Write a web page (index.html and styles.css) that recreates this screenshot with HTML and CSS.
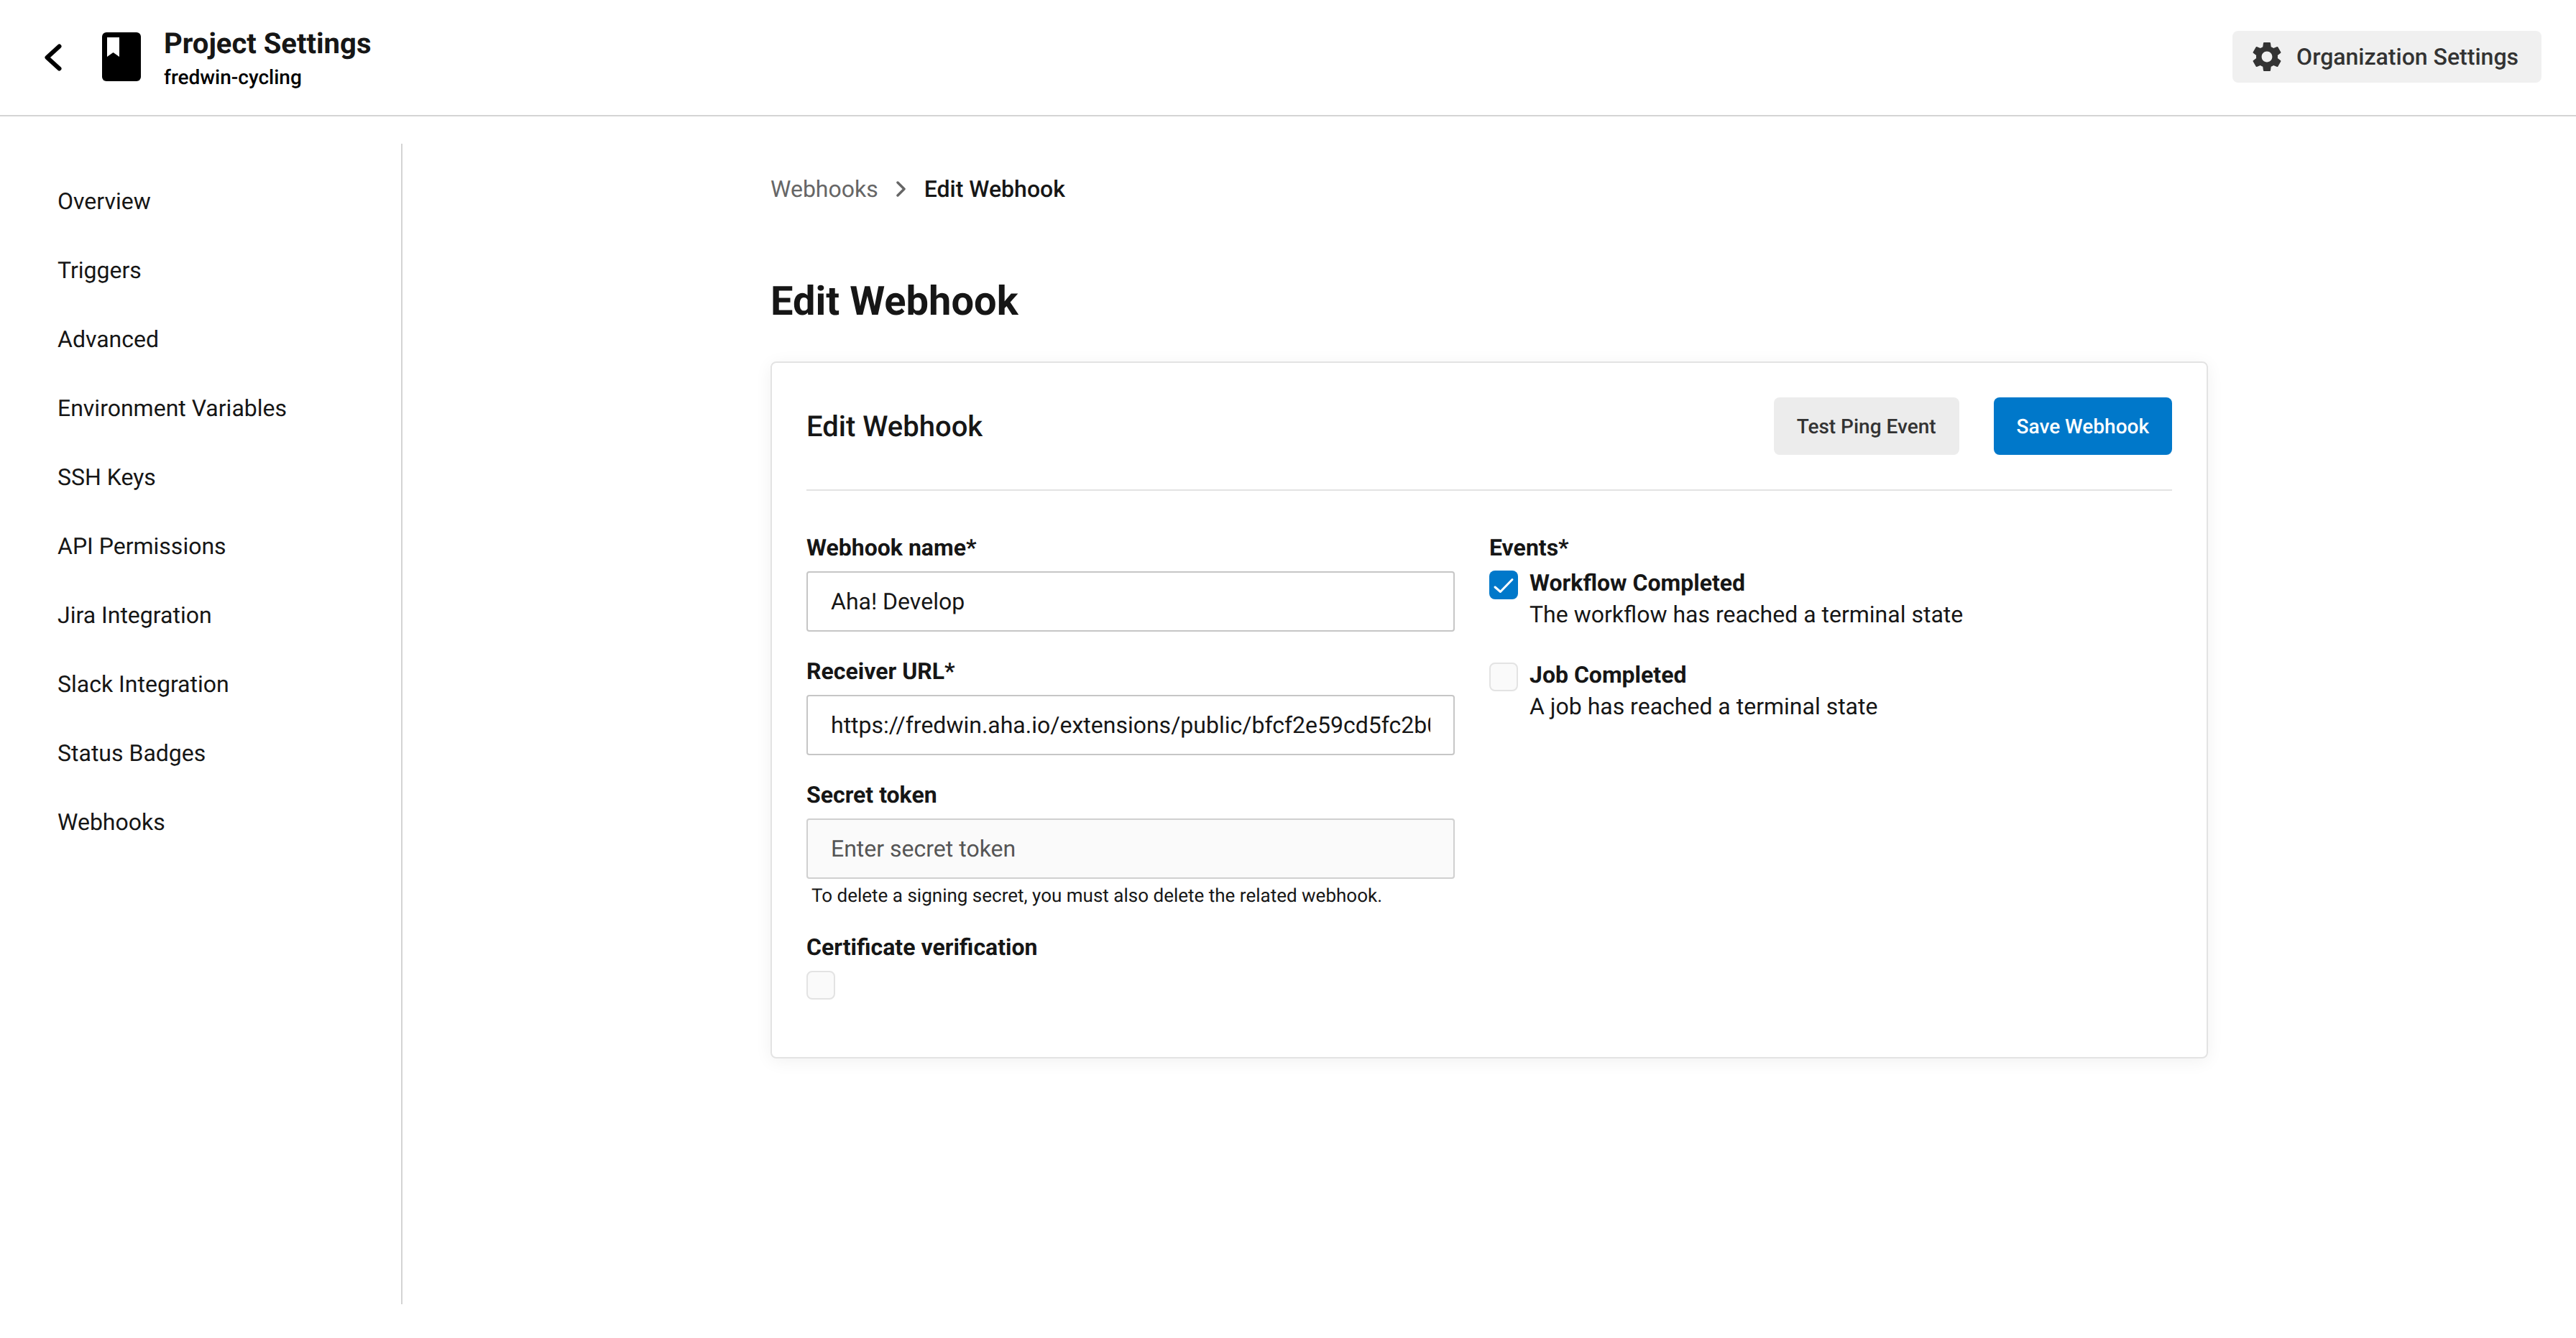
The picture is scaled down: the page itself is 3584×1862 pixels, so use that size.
FILE: index.html
```html
<!doctype html>
<html>
  <head>
    <title>Project Settings</title>
    <meta name="viewport" content="width=device-width, initial-scale=1.0" />
    <link rel="stylesheet" href="styles.css">
  </head>
  <body>
    <header class="topbar">
      <div class="topbar-left">
        <svg class="back-icon" xmlns="http://www.w3.org/2000/svg" viewBox="0 0 24 38">
          <path d="M20.500 3.500L3.500 19l17 15.500" fill="none" stroke="#000" stroke-width="6" stroke-linecap="round" stroke-linejoin="round" />
        </svg>
        <svg class="book-icon" xmlns="http://www.w3.org/2000/svg" viewBox="0 0 54 68">
          <path d="M6 0h42a6 6 0 0 1 6 6v56a6 6 0 0 1-6 6H6a6 6 0 0 1-6-6V6a6 6 0 0 1 6-6z" fill="#000" />
          <path d="M7 7h17v27l-8.500-6L7 34z" fill="#fff" />
        </svg>
        <div class="project">
          <div class="project-title">Project Settings</div>
          <div class="project-name">fredwin-cycling</div>
        </div>
      </div>
      <button class="org-button">
        <svg class="gear-icon" xmlns="http://www.w3.org/2000/svg" viewBox="0 0 24 24">
          <path d="M19.430 12.980c.04-.32.07-.64.07-.98s-.03-.66-.07-.98l2.110-1.650c.19-.15.24-.42.12-.64l-2-3.460c-.12-.22-.39-.3-.61-.22l-2.490 1c-.52-.4-1.080-.73-1.690-.98l-.38-2.650C14.460 2.180 14.250 2 14 2h-4c-.25 0-.46.18-.49.42l-.38 2.650c-.61.25-1.170.59-1.690.98l-2.490-1c-.23-.09-.49 0-.61.22l-2 3.460c-.13.22-.07.49.12.64l2.110 1.650c-.04.32-.07.65-.07.98s.03.66.07.98l-2.110 1.650c-.19.15-.24.42-.12.64l2 3.460c.12.22.39.3.61.22l2.490-1c.52.4 1.080.73 1.690.98l.38 2.650c.03.24.24.42.49.42h4c.25 0 .46-.18.49-.42l.38-2.650c.61-.25 1.170-.59 1.690-.98l2.490 1c.23.09.49 0 .61-.22l2-3.460c.12-.22.07-.49-.12-.64l-2.110-1.650zM12 15.700c-2.040 0-3.700-1.660-3.700-3.700s1.660-3.700 3.700-3.700 3.700 1.660 3.700 3.700-1.660 3.700-3.700 3.700z" fill="#333" />
        </svg>
        Organization Settings
      </button>
    </header>

    <div class="shell">
      <nav class="sidebar">
        <a>Overview</a>
        <a>Triggers</a>
        <a>Advanced</a>
        <a>Environment Variables</a>
        <a>SSH Keys</a>
        <a>API Permissions</a>
        <a>Jira Integration</a>
        <a>Slack Integration</a>
        <a>Status Badges</a>
        <a>Webhooks</a>
      </nav>

      <main class="content">
        <div class="breadcrumb">
          <span class="crumb-link">Webhooks</span>
          <svg class="crumb-icon" xmlns="http://www.w3.org/2000/svg" viewBox="0 0 16 24">
            <path d="M3 3l9 9-9 9" fill="none" stroke="#666" stroke-width="3.500" stroke-linecap="round" stroke-linejoin="round" />
          </svg>
          <span class="crumb-current">Edit Webhook</span>
        </div>

        <h1>Edit Webhook</h1>

        <section class="card">
          <div class="card-head">
            <h2>Edit Webhook</h2>
            <div class="card-actions">
              <button class="btn btn-grey">Test Ping Event</button>
              <button class="btn btn-blue">Save Webhook</button>
            </div>
          </div>

          <form class="form-grid" onsubmit="return false;">
            <div class="form-col">
              <div class="field">
                <label>Webhook name*</label>
                <input type="text" value="Aha! Develop" />
              </div>
              <div class="field">
                <label>Receiver URL*</label>
                <input type="text" value="https://fredwin.aha.io/extensions/public/bfcf2e59cd5fc2b0a1d7c4e8f6" />
              </div>
              <div class="field">
                <label>Secret token</label>
                <input type="text" class="input-empty" placeholder="Enter secret token" />
                <p class="hint">To delete a signing secret, you must also delete the related webhook.</p>
              </div>
              <div class="field">
                <label>Certificate verification</label>
                <span class="check"></span>
              </div>
            </div>

            <div class="form-col">
              <div class="events-label">Events*</div>
              <div class="event">
                <span class="check check-on">
                  <svg xmlns="http://www.w3.org/2000/svg" viewBox="0 0 40 40">
                    <path d="M8 23l7.500 6.500L32 12.500" fill="none" stroke="#fff" stroke-width="3" stroke-linecap="round" stroke-linejoin="round" />
                  </svg>
                </span>
                <div>
                  <div class="event-name">Workflow Completed</div>
                  <div class="event-desc">The workflow has reached a terminal state</div>
                </div>
              </div>
              <div class="event">
                <span class="check"></span>
                <div>
                  <div class="event-name">Job Completed</div>
                  <div class="event-desc">A job has reached a terminal state</div>
                </div>
              </div>
            </div>
          </form>
        </section>
      </main>
    </div>
  </body>
</html>
```

FILE: styles.css
```css
* {
  box-sizing: border-box;
}
body {
  margin: 0;
  background: #fff;
  color: #161616;
  font-family: Roboto, sans-serif;
  font-size: 32px;
  text-rendering: geometricPrecision;
}
button,
input {
  font-family: inherit;
  text-rendering: inherit;
}

/* top bar */
.topbar {
  display: flex;
  align-items: center;
  justify-content: space-between;
  height: 162px;
  padding: 0 48px 2px 62px;
  border-bottom: 2px solid #d4d4d4;
}
.topbar-left {
  display: flex;
  align-items: center;
}
.back-icon {
  width: 24px;
  height: 38px;
  margin: 2px 56px 0 0;
}
.book-icon {
  width: 54px;
  height: 68px;
  margin-right: 32px;
}
.project {
  padding-top: 5px;
}
.project-title {
  font-size: 40px;
  font-weight: 700;
  line-height: 48px;
}
.project-name {
  margin-top: 5px;
  font-size: 28px;
  font-weight: 500;
  line-height: 36px;
  color: #000;
}
.org-button {
  display: flex;
  align-items: center;
  gap: 17px;
  height: 72px;
  padding: 0 32px 0 24px;
  border: none;
  border-radius: 8px;
  background: #f0f0f0;
  color: #333;
  font-size: 32px;
  font-weight: 500;
}
.gear-icon {
  width: 48px;
  height: 48px;
}

/* page */
.shell {
  display: flex;
}
.sidebar {
  display: flex;
  flex-direction: column;
  flex: none;
  width: 560px;
  height: 1615px;
  margin-top: 38px;
  padding: 32px 0 0 80px;
  border-right: 2px solid #d4d4d4;
}
.sidebar a {
  height: 96px;
  line-height: 96px;
  color: #161616;
}
.content {
  flex: 1;
  padding: 0 512px;
}

.breadcrumb {
  display: flex;
  align-items: center;
  height: 40px;
  margin-top: 81px;
}
.crumb-link {
  color: #666;
}
.crumb-icon {
  width: 16px;
  height: 24px;
  margin: 0 24px;
}
.crumb-current {
  font-weight: 500;
}
h1 {
  margin: 100px 0 0;
  font-size: 56px;
  font-weight: 700;
  line-height: 72px;
}

/* card */
.card {
  height: 970px;
  margin-top: 48px;
  padding: 48px 48px 0;
  border: 2px solid #e3e3e3;
  border-radius: 8px;
  box-shadow: 0 4px 24px rgba(0, 0, 0, 0.06);
}
.card-head {
  display: flex;
  align-items: center;
  justify-content: space-between;
  padding-bottom: 48px;
  border-bottom: 2px solid #e3e3e3;
}
h2 {
  margin: 0;
  font-size: 40px;
  font-weight: 500;
}
.card-actions {
  display: flex;
  gap: 48px;
}
.btn {
  height: 80px;
  padding: 0 32px;
  border: none;
  border-radius: 8px;
  font-size: 28px;
  font-weight: 500;
}
.btn-grey {
  background: #ececec;
  color: #333;
}
.btn-blue {
  background: #0078ca;
  color: #fff;
}

.form-grid {
  display: grid;
  grid-template-columns: 902px 1fr;
  gap: 48px;
  padding-top: 58px;
}
.field {
  margin-bottom: 34px;
}
label,
.events-label {
  display: block;
  height: 42px;
  margin-bottom: 12px;
  font-weight: 700;
  line-height: 42px;
}
.field input {
  display: block;
  width: 100%;
  height: 84px;
  padding: 0 32px;
  border: 2px solid #c6c6c6;
  border-radius: 4px;
  background: #fff;
  color: #161616;
  font-size: 32px;
}
.field input.input-empty {
  border-color: #d0d0d0;
  background: #fafafa;
}
.field input::placeholder {
  color: #555;
  opacity: 1;
}
.hint {
  margin: 8px 0 0 7px;
  font-size: 26px;
  line-height: 32px;
}

/* checkboxes */
.check {
  display: block;
  flex: none;
  width: 40px;
  height: 40px;
  margin-top: 5px;
  border: 2px solid #e3e3e3;
  border-radius: 8px;
  background: #fafafa;
}
.field .check {
  margin-top: 0;
}
.check-on {
  border: none;
  background: #0078ca;
}
.check-on svg {
  display: block;
}
.events-label {
  margin-bottom: 6px;
}
.event {
  display: flex;
  gap: 16px;
  margin-bottom: 40px;
}
.event-name {
  font-weight: 700;
  line-height: 44px;
}
.event-desc {
  line-height: 44px;
}
```
